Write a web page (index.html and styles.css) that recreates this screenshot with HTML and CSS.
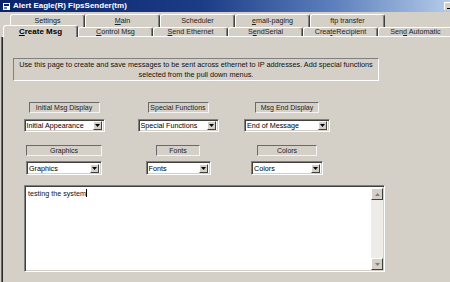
FILE: index.html
```html
<!DOCTYPE html>
<html>
<head>
<meta charset="utf-8">
<link rel="stylesheet" href="styles.css">
</head>
<body>
<div class="window">
  <div class="titlebar">
    <span class="appicon"><svg width="7" height="7" viewBox="0 0 7 7"><rect x="0" y="0" width="7" height="7" fill="#fff"/><rect x="1" y="1" width="5" height="2" fill="#0a246a"/><rect x="1" y="4" width="3" height="2" fill="#6080c0"/></svg></span>
    <span class="title">Alert Eagle(R) FipsSender(tm)</span>
    <span class="minbtn"><span class="minbar"></span></span>
  </div>
  <div class="tabs-back">
    <div class="tab">Settings</div>
    <div class="tab"><u>M</u>ain</div>
    <div class="tab">Scheduler</div>
    <div class="tab"><u>e</u>mail-paging</div>
    <div class="tab">ftp transfer</div>
  </div>
  <div class="tabs-front">
    <div class="tab sel"><u>C</u>reate Msg</div>
    <div class="tab"><u>C</u>ontrol Msg</div>
    <div class="tab"><u>S</u>end Ethernet</div>
    <div class="tab">S<u>e</u>ndSerial</div>
    <div class="tab">Crea<u>t</u>eRecipient</div>
    <div class="tab">Sen<u>d</u> Automatic</div>
  </div>
  <div class="panel">
    <div class="desc">Use this page to create and save messages to be sent across ethernet to IP addresses. Add special functions<br>selected from the pull down menus.</div>
    <div class="fieldrow r1">
      <div class="field c1">
        <div class="label l11">Initial Msg Display</div>
        <div class="combo d11"><span class="ctext">Initial Appearance</span><span class="cbtn"><svg width="5" height="3" viewBox="0 0 5 3"><path d="M0 0H5L2.5 3Z" fill="#000"/></svg></span></div>
      </div>
      <div class="field c2">
        <div class="label l12">Special Functions</div>
        <div class="combo d12"><span class="ctext">Special Functions</span><span class="cbtn"><svg width="5" height="3" viewBox="0 0 5 3"><path d="M0 0H5L2.5 3Z" fill="#000"/></svg></span></div>
      </div>
      <div class="field c3">
        <div class="label l13">Msg End Display</div>
        <div class="combo d13"><span class="ctext">End of Message</span><span class="cbtn"><svg width="5" height="3" viewBox="0 0 5 3"><path d="M0 0H5L2.5 3Z" fill="#000"/></svg></span></div>
      </div>
    </div>
    <div class="fieldrow r2">
      <div class="field c1">
        <div class="label l21">Graphics</div>
        <div class="combo d21"><span class="ctext">Graphics</span><span class="cbtn"><svg width="5" height="3" viewBox="0 0 5 3"><path d="M0 0H5L2.5 3Z" fill="#000"/></svg></span></div>
      </div>
      <div class="field c2">
        <div class="label l22">Fonts</div>
        <div class="combo d22"><span class="ctext">Fonts</span><span class="cbtn"><svg width="5" height="3" viewBox="0 0 5 3"><path d="M0 0H5L2.5 3Z" fill="#000"/></svg></span></div>
      </div>
      <div class="field c3">
        <div class="label l23">Colors</div>
        <div class="combo d23"><span class="ctext">Colors</span><span class="cbtn"><svg width="5" height="3" viewBox="0 0 5 3"><path d="M0 0H5L2.5 3Z" fill="#000"/></svg></span></div>
      </div>
    </div>
    <div class="memo">
      <div class="memotext">testing the system<span class="caret"></span></div>
      <div class="vscroll">
        <span class="sbtn"><svg width="5" height="3" viewBox="0 0 5 3"><path d="M0 3H5L2.5 0Z" fill="#808080"/></svg></span>
        <span class="strack"></span>
        <span class="sbtn"><svg width="5" height="3" viewBox="0 0 5 3"><path d="M0 0H5L2.5 3Z" fill="#808080"/></svg></span>
      </div>
    </div>
  </div>
</div>
</body>
</html>
```

FILE: styles.css
```css
* { box-sizing: border-box; }
html, body { margin: 0; padding: 0; }
body {
  width: 450px;
  height: 282px;
  overflow: hidden;
  background: #d4d0c8;
  font-family: "Liberation Sans", Arial, sans-serif;
  font-size: 7px;
  color: #000;
}
.window {
  width: 450px;
  height: 282px;
  display: flex;
  flex-direction: column;
}
.titlebar {
  height: 12px;
  flex: none;
  display: flex;
  align-items: center;
  padding-left: 3px;
  background: linear-gradient(to right, #0a246a 0%, #1c3c86 45%, #5f82bf 75%, #b4cbe8 100%);
  color: #fff;
  font-weight: bold;
  font-size: 8px;
  white-space: nowrap;
}
.appicon { display: flex; width: 7px; height: 7px; margin-right: 3px; }
.title { flex: 1; line-height: 12px; }
.minbtn {
  width: 9px;
  height: 8px;
  margin-right: -3px;
  background: #d4d0c8;
  border-top: 1px solid #fff;
  border-left: 1px solid #fff;
  display: flex;
  align-items: flex-end;
  justify-content: center;
  padding-bottom: 1px;
}
.minbar { width: 4px; height: 1px; background: #000; }

.tab {
  flex: none;
  width: 75px;
  text-align: center;
  white-space: nowrap;
  background: #d4d0c8;
  border-top: 1px solid #fff;
  border-left: 1px solid #fff;
  border-right: 1px solid #404040;
  box-shadow: inset -1px 0 #808080;
  border-radius: 3px 3px 0 0;
}
.tab u { text-decoration: underline; }
.tabs-back {
  display: flex;
  height: 13px;
  margin-top: 2px;
  padding-left: 10px;
}
.tabs-back .tab { height: 13px; padding-top: 1px; line-height: 9px; color: #222; font-size: 7.2px; }
.tabs-front {
  display: flex;
  align-items: flex-start;
  height: 12px;
  margin-top: -2px;
  margin-bottom: -1px;
  padding-left: 3px;
  position: relative;
  z-index: 1;
}
.tabs-front .tab {
  height: 9px;
  margin-top: 2px;
  line-height: 8px;
  color: #222;
  font-size: 7.2px;
}
.tabs-front .tab.sel {
  height: 12px;
  margin-top: 0;
  font-weight: bold;
  font-size: 8px;
  line-height: 10px;
  padding-top: 1px;
  color: #000;
}

.panel {
  flex: 1;
  border-top: 1px solid #fff;
  border-left: 1px solid #6a6a6a;
  margin-left: 1px;
  box-shadow: inset 1px 0 #2a2a2a;
  display: flex;
  flex-direction: column;
  align-items: flex-start;
}
.desc {
  margin-top: 21px;
  margin-left: 11px;
  width: 366px;
  height: 23px;
  border-top: 1px solid #808080;
  border-left: 1px solid #808080;
  border-bottom: 1px solid #fff;
  border-right: 1px solid #fff;
  text-align: center;
  line-height: 10px;
  padding-top: 1px;
  color: #111;
  font-size: 7.3px;
}
.fieldrow {
  display: flex;
  align-items: flex-start;
  padding-left: 12px;
}
.r1 { margin-top: 21px; }
.r2 { margin-top: 13px; }
.field {
  width: 100px;
  display: flex;
  flex-direction: column;
  align-items: center;
}
.c2 { margin-left: 14px; }
.c3 { margin-left: 9px; }
.label {
  height: 11px;
  border-top: 1px solid #6a6a6a;
  border-left: 1px solid #6a6a6a;
  border-bottom: 1px solid #f4f4f4;
  border-right: 1px solid #f4f4f4;
  text-align: center;
  line-height: 9px;
  color: #222;
  white-space: nowrap;
}
.l11 { width: 71px; }
.l12 { width: 61px; }
.l13 { width: 64px; }
.l21 { width: 76px; }
.l22 { width: 44px; }
.l23 { width: 60px; }
.combo {
  height: 14px;
  margin-top: 5px;
  background: #fff;
  border-top: 1px solid #808080;
  border-left: 1px solid #808080;
  border-bottom: 1px solid #fff;
  border-right: 1px solid #fff;
  box-shadow: inset 1px 1px #404040, inset -1px -1px #d4d0c8;
  display: flex;
  align-items: center;
  padding: 2px 2px 2px 2px;
}
.r1 .combo { height: 13px; margin-top: 6px; }
.d11 { width: 81px; }
.d12 { width: 81px; }
.d13 { width: 86px; }
.d21 { width: 76px; }
.d22 { width: 65px; }
.d23 { width: 72px; }
.ctext { flex: 1; white-space: nowrap; line-height: 9px; font-size: 7.2px; }
.cbtn {
  width: 9px;
  height: 9px;
  background: #d4d0c8;
  border-top: 1px solid #fff;
  border-left: 1px solid #fff;
  border-right: 1px solid #404040;
  border-bottom: 1px solid #404040;
  display: flex;
  align-items: center;
  justify-content: center;
}
.memo {
  margin-top: 10px;
  margin-left: 22px;
  width: 361px;
  height: 87px;
  background: #fff;
  border-top: 1px solid #808080;
  border-left: 1px solid #808080;
  border-bottom: 1px solid #fff;
  border-right: 1px solid #fff;
  box-shadow: inset 1px 1px #404040, inset -1px -1px #d4d0c8;
  display: flex;
  padding: 2px 1px 1px 2px;
}
.memotext {
  flex: 1;
  line-height: 9px;
  padding-left: 1px;
  padding-top: 1px;
  color: #111;
  font-size: 7.2px;
}
.caret {
  display: inline-block;
  width: 1px;
  height: 8px;
  background: #000;
  vertical-align: -1px;
}
.vscroll {
  width: 12px;
  display: flex;
  flex-direction: column;
  background: #eeece8;
}
.sbtn {
  height: 12px;
  background: #d4d0c8;
  border-top: 1px solid #fff;
  border-left: 1px solid #fff;
  border-right: 1px solid #404040;
  border-bottom: 1px solid #404040;
  display: flex;
  align-items: center;
  justify-content: center;
}
.strack { flex: 1; }
```
